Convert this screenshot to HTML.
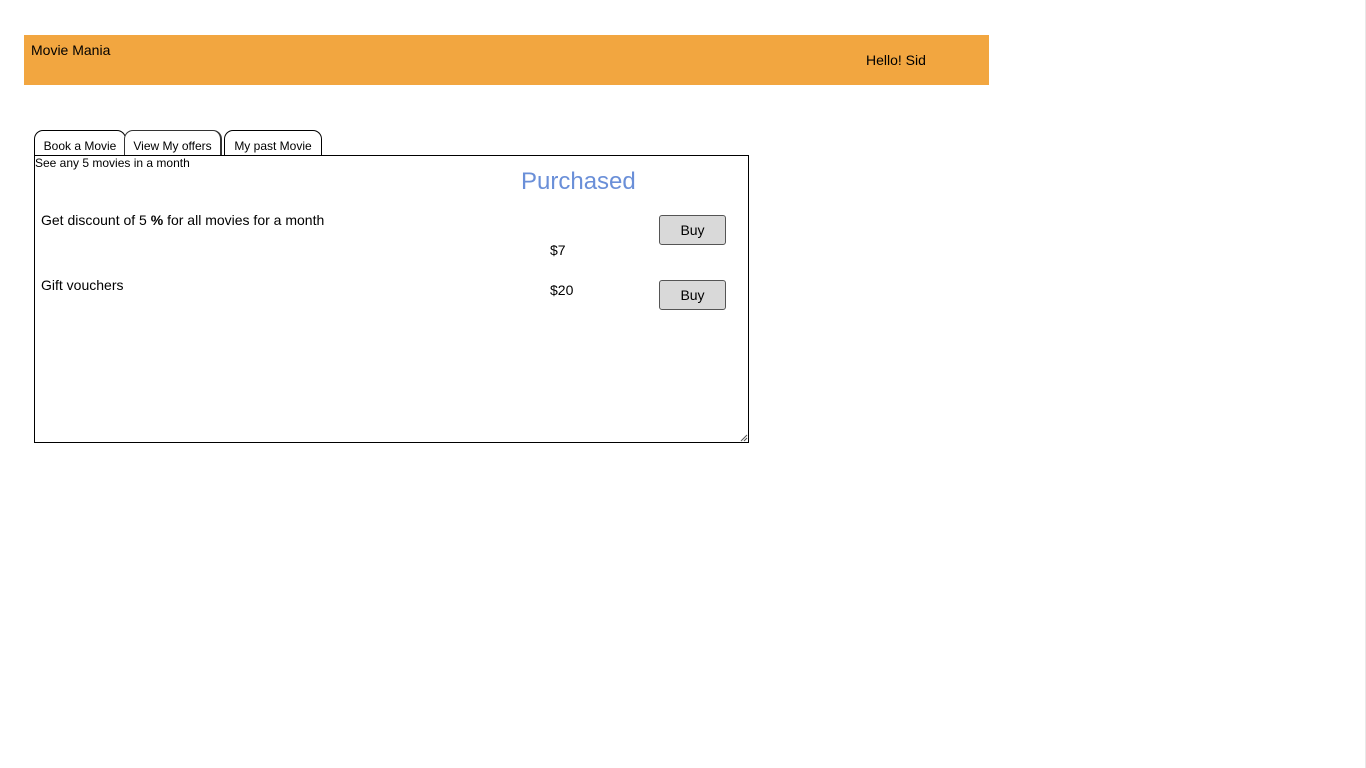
<!DOCTYPE html>
<html><head><meta charset="utf-8"><style>
body{margin:0;width:1366px;height:768px;background:#fff;position:relative;overflow:hidden;font-family:"Liberation Sans",sans-serif;color:#000}
.a{position:absolute;white-space:nowrap}
.tab{position:absolute;top:130px;height:25px;border:1px solid #000;border-bottom:none;border-radius:9px 9px 0 0;background:#fff;font-size:12px;text-align:center;line-height:31px;box-sizing:border-box}
.btn{position:absolute;width:67px;height:30px;box-sizing:border-box;border:1px solid #555;border-radius:3px;background:#d9d9d9;font-size:14px;text-align:center;line-height:28px}
</style></head><body>
<div class="a" style="left:1365px;top:0;width:1px;height:768px;background:#e8e8e8"></div>
<div class="a" style="left:24px;top:35px;width:965px;height:50px;background:#f2a640"></div>
<div class="a" style="left:31px;top:42px;font-size:14px">Movie Mania</div>
<div class="a" style="left:866px;top:52px;font-size:14px">Hello! Sid</div>
<div class="tab" style="left:34px;width:92px">Book a Movie</div>
<div class="tab" style="left:124px;width:98px;border-color:#333;border-width:1px 2px 0 1px">View My offers</div>
<div class="tab" style="left:224px;width:98px">My past Movie</div>
<div class="a" style="left:34px;top:155px;width:715px;height:288px;border:1px solid #000;box-sizing:border-box"></div>
<div class="a" style="left:35px;top:156px;font-size:12px">See any 5 movies in a month</div>
<div class="a" style="left:521px;top:168px;font-size:24px;color:#6a8fd8">Purchased</div>
<div class="a" style="left:41px;top:212px;font-size:14px">Get discount of 5 <b>%</b> for all movies for a month</div>
<div class="a" style="left:550px;top:242px;font-size:14px">$7</div>
<div class="a" style="left:41px;top:277px;font-size:14px">Gift vouchers</div>
<div class="a" style="left:550px;top:282px;font-size:14px">$20</div>
<div class="btn" style="left:659px;top:215px">Buy</div>
<div class="btn" style="left:659px;top:280px">Buy</div>
<svg class="a" style="left:740px;top:434px" width="8" height="8"><path d="M1 7L7 1M4 7L7 4" stroke="#555" stroke-width="1"/></svg>
</body></html>
